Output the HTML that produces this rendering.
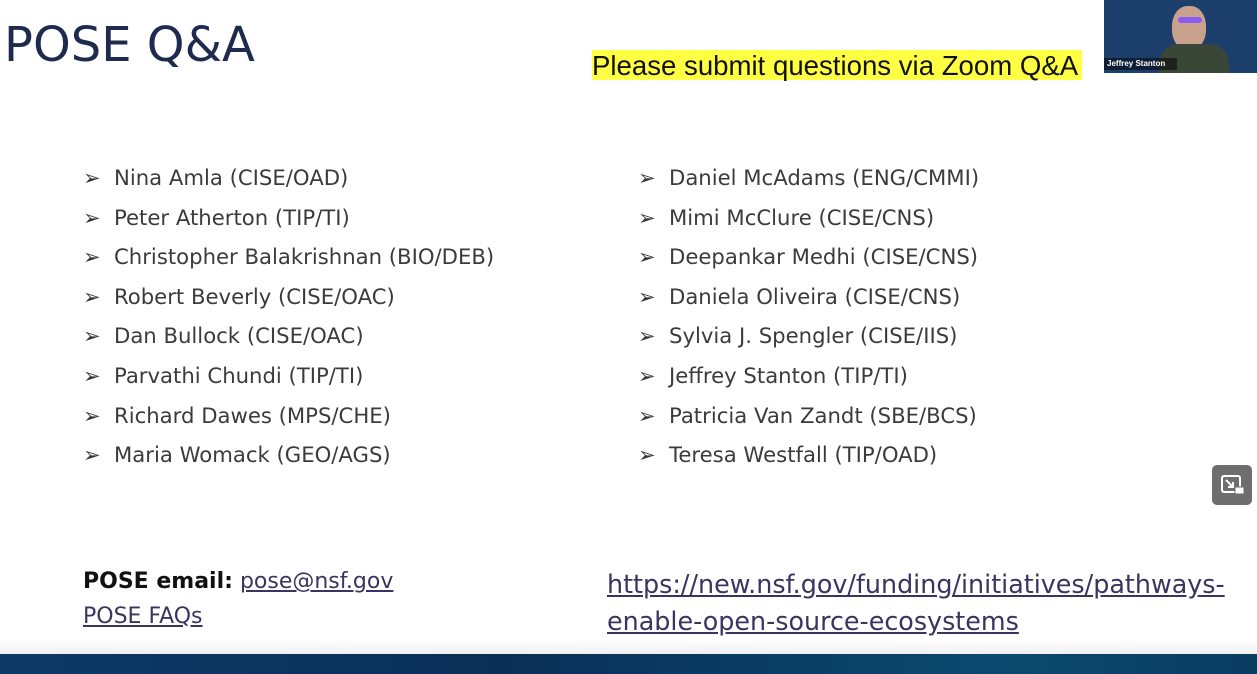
<!DOCTYPE html>
<html><head><style>
body{margin:0;width:1257px;height:674px;overflow:hidden;background:#fff;font-family:"DejaVu Sans","Liberation Sans",sans-serif;position:relative}
.t{position:absolute;left:4px;top:17px;font-size:48px;color:#1f2a4f;font-family:"DejaVu Sans",sans-serif}
.hl{position:absolute;left:592px;top:50px;width:490px;height:30px;background:#ffff44;font-family:"Liberation Sans",sans-serif;font-size:27.6px;color:#111;line-height:31px;white-space:nowrap}
.cam{position:absolute;left:1104px;top:0;width:153px;height:73px;background:#1c3e6a}
ul{position:absolute;list-style:none;margin:0;padding:0;font-size:21.2px;color:#3b3b3b}
li{height:39.6px;line-height:39.6px}
li span{display:inline-block;width:31px;font-size:21px;color:#333}
a{color:#3a3560;text-decoration:underline}
</style></head><body>
<div class="t">POSE Q&amp;A</div>
<div class="hl">Please submit questions via Zoom Q&amp;A</div>
<div class="cam">
<div style="position:absolute;left:68px;top:6px;width:34px;height:44px;border-radius:45%;background:#c9a28e"></div>
<div style="position:absolute;left:55px;top:44px;width:70px;height:29px;border-radius:20px 20px 0 0;background:#3a4636"></div>
<div style="position:absolute;left:74px;top:17px;width:24px;height:6px;background:#8a5cf0;border-radius:3px"></div>
<div style="position:absolute;left:0;top:58px;width:70px;height:12px;background:rgba(0,0,0,.5);color:#fff;font:bold 8px 'Liberation Sans',sans-serif;line-height:12px;padding-left:3px">Jeffrey Stanton</div>
</div>
<ul style="left:83px;top:158px">
<li><span>➢</span>Nina Amla (CISE/OAD)</li>
<li><span>➢</span>Peter Atherton (TIP/TI)</li>
<li><span>➢</span>Christopher Balakrishnan (BIO/DEB)</li>
<li><span>➢</span>Robert Beverly (CISE/OAC)</li>
<li><span>➢</span>Dan Bullock (CISE/OAC)</li>
<li><span>➢</span>Parvathi Chundi (TIP/TI)</li>
<li><span>➢</span>Richard Dawes (MPS/CHE)</li>
<li><span>➢</span>Maria Womack (GEO/AGS)</li>
</ul>
<ul style="left:638px;top:158px">
<li><span>➢</span>Daniel McAdams (ENG/CMMI)</li>
<li><span>➢</span>Mimi McClure (CISE/CNS)</li>
<li><span>➢</span>Deepankar Medhi (CISE/CNS)</li>
<li><span>➢</span>Daniela Oliveira (CISE/CNS)</li>
<li><span>➢</span>Sylvia J. Spengler (CISE/IIS)</li>
<li><span>➢</span>Jeffrey Stanton (TIP/TI)</li>
<li><span>➢</span>Patricia Van Zandt (SBE/BCS)</li>
<li><span>➢</span>Teresa Westfall (TIP/OAD)</li>
</ul>
<div style="position:absolute;left:83px;top:564px;font-size:22px;line-height:35px;color:#111"><b>POSE email:</b> <a>pose@nsf.gov</a><br><a>POSE FAQs</a></div>
<div style="position:absolute;left:607px;top:566px;font-size:25.4px;line-height:37px;color:#3a3560;white-space:nowrap"><a>https://new.nsf.gov/funding/initiatives/pathways-</a><br><a>enable-open-source-ecosystems</a></div>
<div style="position:absolute;left:1212px;top:465px;width:40px;height:40px;border-radius:5px;background:#6e6e6e">
<svg width="40" height="40"><rect x="10" y="11" width="18" height="16" rx="2" fill="none" stroke="#fff" stroke-width="2"/><path d="M14 15l7 7M21 17v5h-5" fill="none" stroke="#fff" stroke-width="2"/><rect x="23" y="22" width="9" height="7" fill="#fff" stroke="#6e6e6e"/></svg></div>
<div style="position:absolute;left:0;top:640px;width:1257px;height:14px;background:linear-gradient(#fff,#f0f0f0)"></div>
<div style="position:absolute;left:0;top:654px;width:1257px;height:20px;background:linear-gradient(90deg,#0d3a66,#0a2f57 40%,#0b4a6e 80%,#0a3c60)"></div>
</body></html>
